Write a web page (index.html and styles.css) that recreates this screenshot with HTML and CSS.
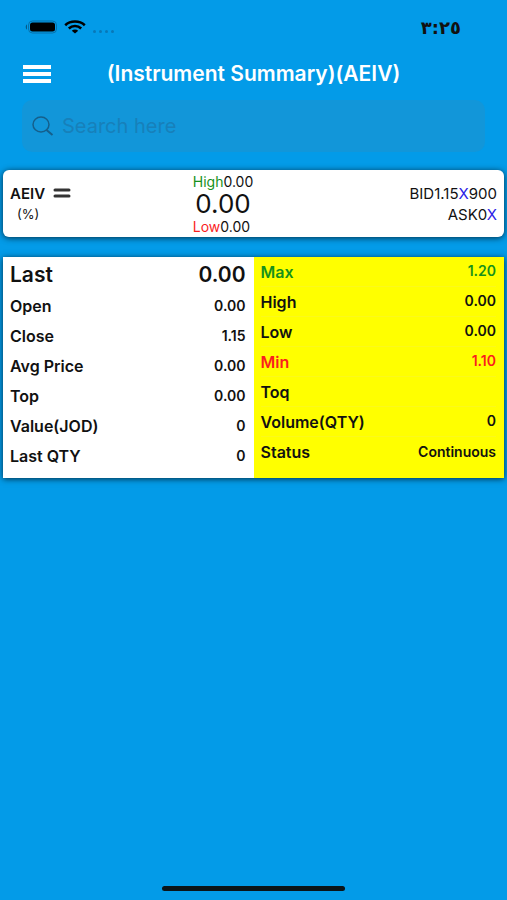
FILE: index.html
```html
<!DOCTYPE html>
<html lang="en">
<head>
    <meta charset="UTF-8">
    <meta name="viewport" content="width=device-width, initial-scale=1.0">
    <title>Instrument Summary</title>
    <link rel="stylesheet" href="styles.css">
</head>
<body>
    <div class="status-bar">
        <div class="status-icons">
            <svg width="34" height="14" viewBox="0 0 34 14">
                <path d="M3 4.5C1.300 5 1.300 9 3 9.500z" fill="#075985"/>
                <rect x="4.500" y="1" width="28" height="12" rx="4" fill="none" stroke="#0671ab"/>
                <rect x="6" y="2.500" width="25" height="9" rx="2.500" fill="#000"/>
            </svg>
            <svg width="22" height="14" viewBox="0 0 22 14" fill="none" stroke="#000" stroke-width="2.600">
                <path d="M1.200 5.200C6.500 0.300 15.500 0.300 20.800 5.200"/>
                <path d="M4.800 8.500C8.300 5.200 13.700 5.200 17.200 8.500"/>
                <path d="M11 13.500L7.800 10.800C9.500 9.200 12.500 9.200 14.200 10.800z" fill="#000" stroke="none"/>
            </svg>
            <svg width="24" height="14" viewBox="0 0 24 14" fill="#0878b8">
                <circle cx="2.500" cy="11.500" r="1.500"/>
                <circle cx="8.500" cy="11.500" r="1.500"/>
                <circle cx="14.500" cy="11.500" r="1.500"/>
                <circle cx="20.500" cy="11.500" r="1.500"/>
            </svg>
        </div>
        <span class="time">٣:٢٥</span>
    </div>

    <header class="header">
        <button class="menu" type="button" aria-label="Menu">
            <span></span>
            <span></span>
            <span></span>
        </button>
        <h1>(Instrument Summary)(AEIV)</h1>
    </header>

    <label class="search">
        <svg width="22" height="20" viewBox="0 0 22 20" fill="none" stroke="#155f8b" stroke-width="1.500">
            <ellipse cx="9" cy="8.500" rx="8" ry="7.500"/>
            <path d="M14.500 14L20.500 19" stroke-width="2"/>
        </svg>
        <input type="search" placeholder="Search here" aria-label="Search here">
    </label>

    <main>
        <section class="card quote">
            <div class="symbol">
                <p class="name">AEIV <svg width="18" height="10" viewBox="0 0 18 10" stroke="#333" stroke-width="3" stroke-linecap="round"><path d="M2 2H16M2 8H16"/></svg></p>
                <p class="percent">(%)</p>
            </div>
            <div class="price">
                <p><span class="green">High</span>0.00</p>
                <p class="current">0.00</p>
                <p><span class="red">Low</span>0.00</p>
            </div>
            <div class="orders">
                <p>BID1.15<span class="blue">X</span>900</p>
                <p>ASK0<span class="blue">X</span></p>
            </div>
        </section>

        <section class="card details">
            <div class="column">
                <table>
                    <tr class="last"><th scope="row">Last</th><td>0.00</td></tr>
                    <tr><th scope="row">Open</th><td>0.00</td></tr>
                    <tr><th scope="row">Close</th><td>1.15</td></tr>
                    <tr><th scope="row">Avg Price</th><td>0.00</td></tr>
                    <tr><th scope="row">Top</th><td>0.00</td></tr>
                    <tr><th scope="row">Value(JOD)</th><td>0</td></tr>
                    <tr><th scope="row">Last QTY</th><td>0</td></tr>
                </table>
            </div>
            <div class="column yellow">
                <table>
                    <tr class="green"><th scope="row">Max</th><td>1.20</td></tr>
                    <tr><th scope="row">High</th><td>0.00</td></tr>
                    <tr><th scope="row">Low</th><td>0.00</td></tr>
                    <tr class="red"><th scope="row">Min</th><td>1.10</td></tr>
                    <tr><th scope="row">Toq</th><td></td></tr>
                    <tr><th scope="row">Volume(QTY)</th><td>0</td></tr>
                    <tr><th scope="row">Status</th><td>Continuous</td></tr>
                </table>
            </div>
        </section>
    </main>

    <div class="home-indicator"></div>
</body>
</html>
```

FILE: styles.css
```css
* {
    box-sizing: border-box;
}

body {
    display: flex;
    flex-direction: column;
    min-height: 100vh;
    margin: 0;
    background-color: #039be8;
    font-family: Inter, "Liberation Sans", sans-serif;
    color: #111;
}

p,
h1 {
    margin: 0;
}

.status-bar {
    display: flex;
    justify-content: space-between;
    align-items: center;
    height: 54px;
    padding: 0 46px 0 24px;
}

.status-icons {
    display: flex;
    align-items: center;
    gap: 6px;
}

.time {
    font-family: "DejaVu Sans", sans-serif;
    font-size: 18px;
    font-weight: bold;
}

.header {
    display: grid;
    grid-template-columns: 28px 1fr 28px;
    align-items: center;
    height: 40px;
    padding: 0 23px;
}

.header h1 {
    color: #fff;
    font-size: 21px;
    font-weight: 600;
    line-height: 24px;
    text-align: center;
    white-space: nowrap;
}

.menu {
    display: flex;
    flex-direction: column;
    gap: 3px;
    padding: 0;
    border: none;
    background: none;
    cursor: pointer;
}

.menu span {
    width: 28px;
    height: 4px;
    background-color: #fff;
}

.search {
    display: flex;
    align-items: center;
    gap: 8px;
    height: 52px;
    margin: 6px 22px 18px;
    padding: 0 10px;
    border-radius: 10px;
    background-color: #1296d9;
}

.search input {
    flex: 1;
    min-width: 0;
    padding: 0;
    border: none;
    outline: none;
    background: none;
    color: #111;
    font-family: inherit;
    font-size: 20px;
}

.search input::placeholder {
    color: #1780ba;
    opacity: 1;
}

main {
    flex: 1;
    padding: 0 3px;
}

.card {
    background-color: #fff;
    box-shadow: 0 1px 6px rgba(0, 0, 0, 0.7);
}

.quote {
    display: grid;
    grid-template-columns: 3fr auto 4fr;
    align-items: center;
    height: 67px;
    margin-bottom: 20px;
    padding: 0 7px;
    border-radius: 6px;
    line-height: 21px;
}

.symbol .name {
    display: flex;
    align-items: center;
    gap: 8px;
    font-size: 15px;
    font-weight: 600;
}

.symbol .percent {
    padding-left: 7px;
    font-size: 13px;
}

.price {
    font-size: 14px;
    line-height: 17px;
}

.price .current {
    font-size: 26px;
    line-height: 28px;
    text-align: center;
}

.orders {
    font-size: 15px;
    text-align: right;
}

.details {
    display: grid;
    grid-template-columns: 1fr 1fr;
}

.column {
    padding: 0 8px 7px 7px;
}

.yellow {
    background-color: #ff0;
}

table {
    width: 100%;
    border-spacing: 0;
}

tr {
    height: 30px;
}

th,
td {
    padding: 0;
    font-weight: 600;
}

th {
    font-size: 16px;
    text-align: left;
}

td {
    padding-bottom: 2px;
    font-size: 14px;
    text-align: right;
}

.last {
    height: 34px;
}

.last th,
.last td {
    padding: 0;
    font-size: 21px;
}

.yellow th,
.yellow td {
    border-bottom: 1px solid #fbf91c;
}

.yellow tr:last-child th,
.yellow tr:last-child td {
    border-bottom: none;
}

.green {
    color: #16911c;
}

.red {
    color: #fa1e1e;
}

.blue {
    color: #2a22e6;
}

.home-indicator {
    width: 36%;
    height: 5px;
    margin: 0 auto 9px;
    border-radius: 3px;
    background-color: #0b1418;
}
```
